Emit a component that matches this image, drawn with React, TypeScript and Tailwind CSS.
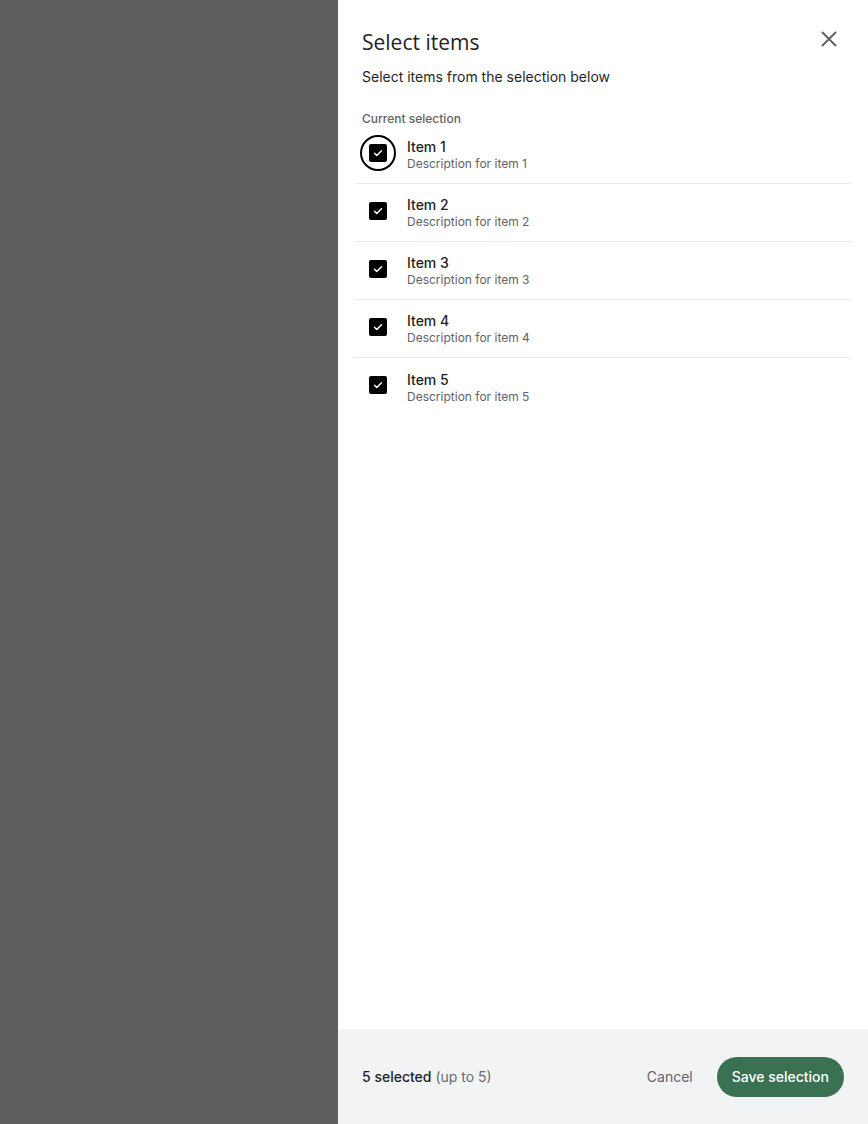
import React from 'react';

const items = [1, 2, 3, 4, 5].map((n) => ({
  id: n,
  title: `Item ${n}`,
  description: `Description for item ${n}`,
}));

function CheckBox({ focused }: { focused?: boolean }) {
  return (
    <div
      className={`w-9 h-9 shrink-0 mb-1 flex items-center justify-center rounded-full ${
        focused ? 'border-2 border-black' : ''
      }`}
    >
      <div className="w-[18px] h-[18px] rounded-[2px] bg-black flex items-center justify-center">
        <svg width="12" height="12" viewBox="0 0 24 24" fill="none">
          <path d="M5 12.5l4.5 4.5L19 7.5" stroke="white" strokeWidth="3" strokeLinecap="round" strokeLinejoin="round" />
        </svg>
      </div>
    </div>
  );
}

export default function App() {
  return (
    <div className="h-[1124px] flex bg-[#5f5f5f]" style={{ fontFamily: 'Inter, Roboto, sans-serif' }}>
      {/* Scrim */}
      <div className="flex-1" />

      {/* Side panel */}
      <div className="w-[530px] bg-white flex flex-col">
        <div className="flex-1 flex flex-col">
          <div className="flex items-start justify-between pl-6 pr-[27px] pt-[29px]">
            <h1 className="text-[21px] leading-[26px] text-[#1f1f1f]" style={{ fontFamily: '"Open Sans", Roboto, sans-serif' }}>
              Select items
            </h1>
            <button className="w-6 h-6 flex items-center justify-center text-[#5f6368] mt-[-2px]">
              <svg width="24" height="24" viewBox="0 0 24 24" fill="none">
                <path d="M5 5l14 14M19 5L5 19" stroke="currentColor" strokeWidth="2" />
              </svg>
            </button>
          </div>
          <p className="px-6 mt-[12px] text-sm leading-5 text-[#1f1f1f]">Select items from the selection below</p>
          <div className="px-6 mt-[24px] text-xs leading-4 font-medium text-[#5f6368]">Current selection</div>

          <div className="mx-[17px] mt-[-1px]">
            {items.map((item, i) => (
              <div
                key={item.id}
                className={`h-[58px] flex items-center pl-[5px] ${i < items.length - 1 ? 'border-b border-[#e8eaed]' : ''}`}
              >
                <CheckBox focused={i === 0} />
                <div className="ml-[11px] flex flex-col">
                  <span className="text-sm leading-[19px] font-medium text-[#1f1f1f]">{item.title}</span>
                  <span className="text-xs leading-4 text-[#5f6368]">{item.description}</span>
                </div>
              </div>
            ))}
          </div>
        </div>

        {/* Footer */}
        <div className="h-[95px] bg-[#f2f3f5] flex items-center justify-between pl-6 pr-6">
          <div className="text-sm text-[#1f1f1f]">
            <span className="font-medium">5 selected</span> <span className="text-[#6b6b6b]">(up to 5)</span>
          </div>
          <div className="flex items-center gap-6">
            <button className="text-sm text-[#5f6368]">Cancel</button>
            <button className="h-10 px-[15px] rounded-full bg-[#3b7153] text-white text-sm font-medium">Save selection</button>
          </div>
        </div>
      </div>
    </div>
  );
}
